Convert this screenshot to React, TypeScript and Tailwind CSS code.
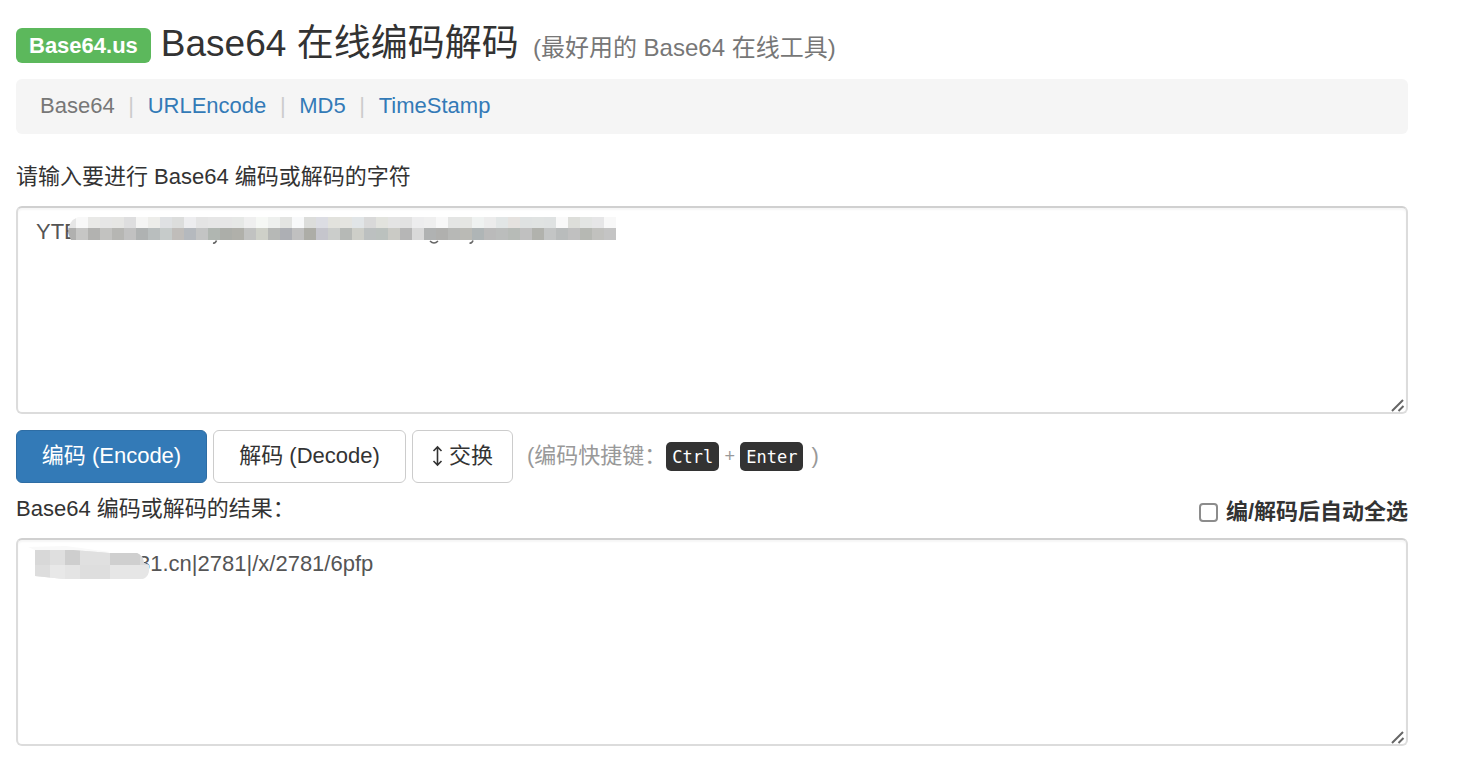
import type { ReactNode } from "react";
import { clsx } from "clsx";

const links = ["URLEncode", "MD5", "TimeStamp"];

const maskTop =
  "e6e6e6 f8f8f8 e9e9e7 e6e6e6 e6e6e4 dededf f5f5f4 ededea dfe1e3 dcdddc ededef e4e4e4 e6e6e6 e6e6e6 e6e8e6 efefef f6f8f5 eef0ee e3e4e2 f8f9fa dcdddb dcdde3 e2e2dd e4e4e0 e1e5e7 d9d9d9 e2e3de e4e4e4 e2e2e2 ededee efefef f8f8f8 e4e5e4 e5e6e3 eff2f1 ececec e2e6e6 e5e2df dfe2e2 e0e3e2 dfe2e2 f9f9f9 dddeda e3e5e3 e6e6e7 f8f8f8".split(" ");
const maskBottom =
  "b0b0af c6c6c5 b2b2b0 c2c2c0 b6b6b3 c1c1c1 afb2b2 b9bebe c6cbca c0bdba b5b9be c3c4c4 b0b6b1 acaea9 b0b0aa c1c2c1 ced0c8 b6b8b6 adafb4 c0c0c0 adada7 c5c5cc cbcdcb b6b9b6 cdcec8 bcc0c0 bbc1be cacac5 b6b6b6 d9d9d9 b0b2b2 b0b0ae b7b8b6 babab5 afb5b6 bababa bbbdbc b7bbb7 c0c0c0 b1b2ad c3c5c5 b9bcbc c0c0c0 b6b8b3 c1c1be c4c4c4".split(" ");

function InputMask() {
  return (
    <svg
      className="pointer-events-none absolute left-12 top-[11px]"
      width="552"
      height="28"
      aria-hidden="true"
    >
      <clipPath id="input-mask">
        <path d="M7 23L4 16Q4 4 14 0H552V23Z" />
      </clipPath>
      <g clipPath="url(#input-mask)" shapeRendering="crispEdges">
        {maskTop.map((c, i) => (
          <rect key={i} x={i * 12} y="0" width="12" height="11" fill={`#${c}`} />
        ))}
        {maskBottom.map((c, i) => (
          <rect key={i} x={i * 12} y="11" width="12" height="12" fill={`#${c}`} />
        ))}
      </g>
      {/* descenders that stick out below the mask */}
      <g fill="none" stroke="#666" strokeWidth="1.6">
        <path d="M149 26Q151.500 26.500 152.500 23.500" />
        <path d="M366 24Q370 28 374 24" />
        <path d="M405.500 26Q408 26.500 409 23.500" />
      </g>
    </svg>
  );
}

function ResultMask() {
  return (
    <svg
      className="pointer-events-none absolute left-3 top-2"
      width="124"
      height="36"
      aria-hidden="true"
    >
      <clipPath id="result-mask">
        <path d="M7 4L45 4L82 7L109 7Q115 9 116 17L121 19Q122 33 112 33H36L7 30Z" />
      </clipPath>
      <path d="M0 1L38 0L82 6H36L7 4Z" fill="#f9f9f9" />
      <g clipPath="url(#result-mask)">
        <rect width="124" height="36" fill="#e4e4e4" />
        <rect x="7" y="2" width="15" height="17" fill="#d8d8d8" />
        <rect x="22" y="2" width="15" height="17" fill="#dfdfdf" />
        <rect x="37" y="2" width="15" height="17" fill="#cecece" />
        <rect x="52" y="2" width="30" height="17" fill="#e0e0e0" />
        <rect x="82" y="2" width="30" height="17" fill="#cfcfcf" />
        <rect x="112" y="2" width="12" height="17" fill="#dadada" />
        <rect x="7" y="19" width="15" height="17" fill="#dddddd" />
        <rect x="22" y="19" width="15" height="17" fill="#e8e8e8" />
        <rect x="52" y="19" width="30" height="17" fill="#dedede" />
        <rect x="82" y="19" width="42" height="17" fill="#e6e6e6" />
      </g>
    </svg>
  );
}

interface TextBoxProps {
  id: string;
  value: string;
  className?: string;
  children?: ReactNode;
}

function TextBox({ id, value, className, children }: TextBoxProps) {
  return (
    <div className="relative">
      <textarea
        id={id}
        defaultValue={value}
        spellCheck={false}
        className={clsx(
          "block h-52 w-full resize-none rounded-md border-2 border-[#dcdcdc] border-t-[#d0d0d0] bg-white px-[18px] py-2 leading-8 text-[#555] shadow-[inset_0_2px_2px_rgba(0,0,0,0.04)] outline-none",
          className,
        )}
      />
      {children}
      <svg
        className="pointer-events-none absolute bottom-[2px] right-[3px]"
        width="14"
        height="13"
        fill="none"
        stroke="#666"
        strokeWidth="2"
        aria-hidden="true"
      >
        <path d="M1 12L12 1M7.500 12L12.500 7" />
      </svg>
    </div>
  );
}

function Button({ primary, className, children }: { primary?: boolean; className: string; children: ReactNode }) {
  return (
    <button
      type="button"
      className={clsx(
        "flex h-[53px] items-center justify-center rounded-md border pb-[2px]",
        primary
          ? "border-[#2e6da4] bg-[#337ab7] text-white"
          : "border-[#ccc] bg-white text-[#333]",
        className,
      )}
    >
      {children}
    </button>
  );
}

function Key({ children }: { children: ReactNode }) {
  return (
    <kbd className="mt-[2px] rounded-[5px] bg-[#333] px-[6px] pt-[2px] font-['DejaVu_Sans_Mono',monospace] text-[17px] leading-[27px] text-white">
      {children}
    </kbd>
  );
}

export default function App() {
  return (
    <main className="bg-white pb-8 pl-4 pr-[50px] pt-5 font-['Liberation_Sans','Noto_Sans_CJK_SC',sans-serif] text-[22px] leading-8 text-[#333]">
      <header className="flex h-[59px] items-start">
        <span className="mr-[10px] mt-2 rounded-md bg-[#5cb85c] px-[13px] font-bold leading-[35px] text-white">
          Base64.us
        </span>
        <h1 className="whitespace-nowrap text-[37px] leading-[48px]">
          Base64 在线编码解码{" "}
          <small className="ml-1 text-2xl leading-none text-[#777]">
            (最好用的 Base64 在线工具)
          </small>
        </h1>
      </header>

      <nav className="h-[55px] rounded-md bg-[#f5f5f5] px-6 pt-[11px]">
        <ul className="flex">
          <li className="text-[#777]">Base64</li>
          {links.map((link) => (
            <li key={link} className="flex">
              <span className="w-[33px] text-center text-[#ccc]">|</span>
              <a href="#" className="text-[#337ab7]">
                {link}
              </a>
            </li>
          ))}
        </ul>
      </nav>

      <label htmlFor="source" className="mb-[13px] mt-[27px] block">
        请输入要进行 Base64 编码或解码的字符
      </label>
      <TextBox id="source" value="YTE">
        <InputMask />
      </TextBox>

      <div className="mt-4 flex items-center gap-[6px]">
        <Button primary className="w-[191px]">
          编码 (Encode)
        </Button>
        <Button className="w-[193px]">解码 (Decode)</Button>
        <Button className="w-[101px] gap-[6px]">
          <svg width="11" height="22" viewBox="0 0 11 22" fill="none" stroke="currentColor" strokeWidth="1.6" aria-hidden="true">
            <path d="M5.500 2V20M1.500 6L5.500 2L9.500 6M1.500 16L5.500 20L9.500 16" />
          </svg>
          交换
        </Button>
        <p className="ml-2 flex items-center pb-[2px] text-[#999]">
          (编码快捷键：
          <Key>Ctrl</Key>
          <span className="w-[21px] text-center text-lg">+</span>
          <Key>Enter</Key>
          <span className="ml-2">)</span>
        </p>
      </div>

      <div className="mb-[9px] mt-[10px] flex items-center justify-between">
        <label htmlFor="result" className="pb-1">
          Base64 编码或解码的结果：
        </label>
        <label className="flex items-center gap-2 pt-[2px] font-bold">
          <input
            type="checkbox"
            className="size-[19px] appearance-none rounded-[4px] border-2 border-[#8c8c8c] bg-white"
          />
          编/解码后自动全选
        </label>
      </div>
      <TextBox id="result" value="31.cn|2781|/x/2781/6pfp" className="indent-[102px]">
        <ResultMask />
      </TextBox>
    </main>
  );
}
